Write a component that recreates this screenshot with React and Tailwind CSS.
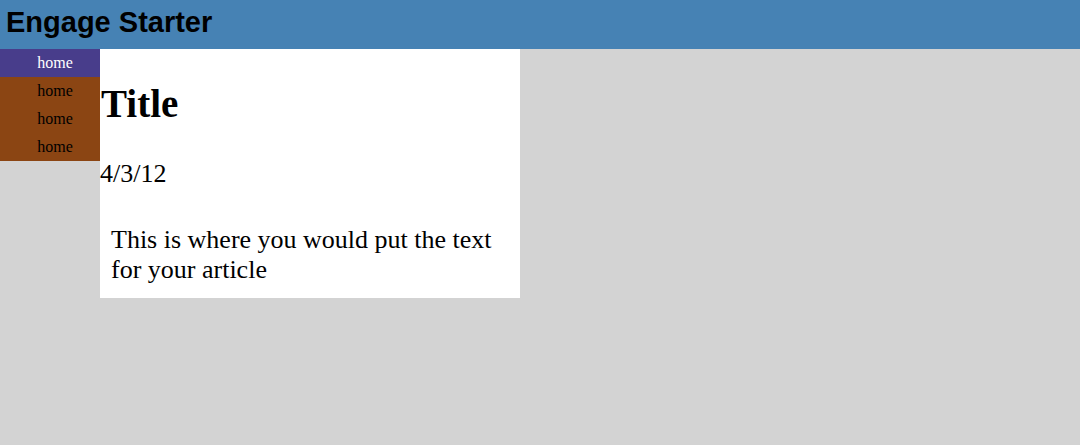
export default function App() {
  const items = ["home", "home", "home", "home"];
  return (
    <div className="min-h-[445px] w-full bg-[#d3d3d3]" style={{ fontFamily: '"Liberation Serif", serif' }}>
      <header className="h-[49px] bg-[#4682b4] flex items-start pt-[8px] px-[6px]">
        <h1 className="text-[29px] font-bold text-black leading-[29px]" style={{ fontFamily: '"Liberation Sans", Arial, sans-serif' }}>
          Engage Starter
        </h1>
      </header>
      <div className="flex items-start">
        <nav className="w-[100px] flex flex-col">
          {items.map((t, i) => (
            <a
              key={i}
              className={`h-[28px] leading-[28px] text-[16px] text-center pl-[10px] ${i === 0 ? "bg-[#483d8b] text-white" : "bg-[#8b4513] text-black"}`}
            >
              {t}
            </a>
          ))}
        </nav>
        <main className="w-[420px] bg-white pb-[13px]">
          <h2 className="mt-[32px] text-[39px] leading-[45px] font-bold text-black pl-[1px]">Title</h2>
          <div className="mt-[33px] text-[26px] leading-[30px] text-black">4/3/12</div>
          <p className="mt-[36px] px-[11px] text-[26px] leading-[30px] text-black">
            This is where you would put the text for your article
          </p>
        </main>
      </div>
    </div>
  );
}
